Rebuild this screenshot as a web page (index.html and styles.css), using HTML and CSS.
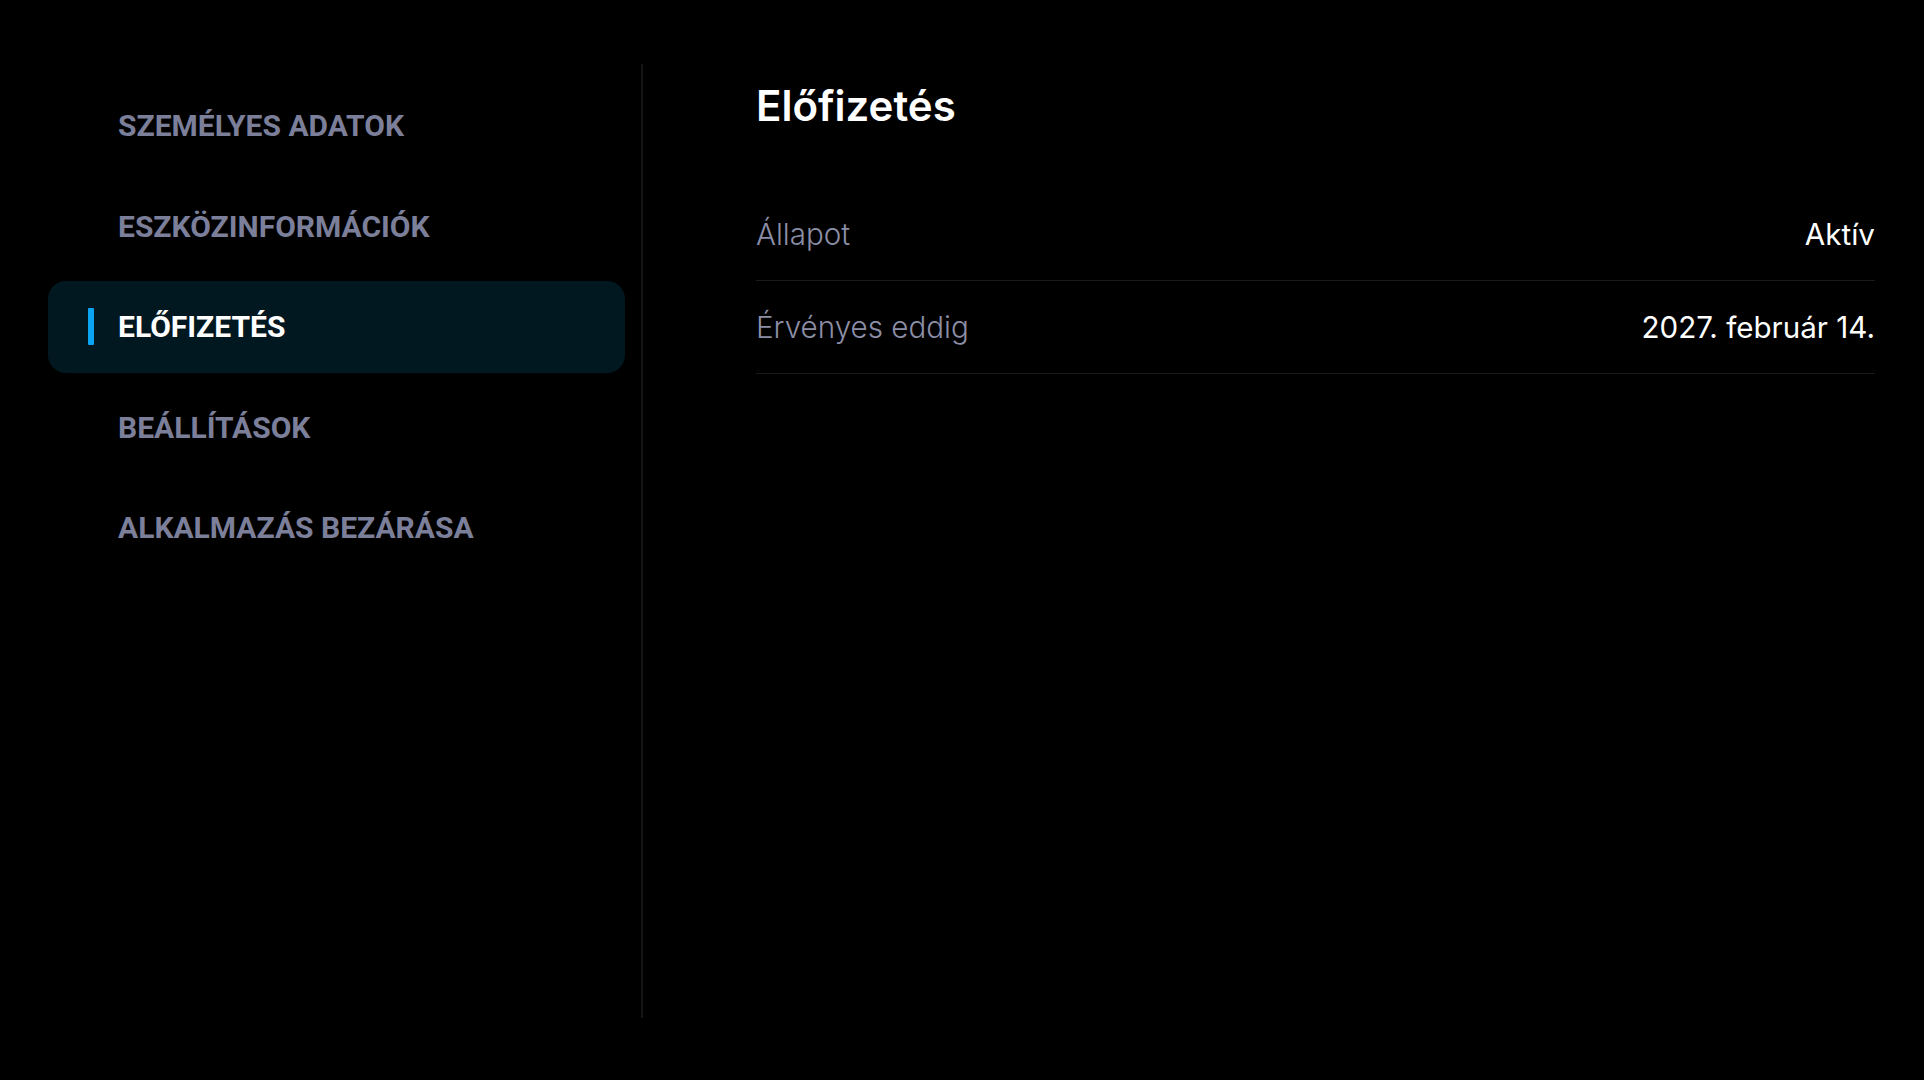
FILE: index.html
```html
<!DOCTYPE html>
<html lang="hu">
<head>
<meta charset="utf-8">
<title>Előfizetés</title>
<link rel="stylesheet" href="styles.css">
</head>
<body>
<div class="screen">
  <nav class="sidebar">
    <ul class="menu">
      <li class="menu-item">SZEMÉLYES ADATOK</li>
      <li class="menu-item">ESZKÖZINFORMÁCIÓK</li>
      <li class="menu-item is-active">ELŐFIZETÉS</li>
      <li class="menu-item">BEÁLLÍTÁSOK</li>
      <li class="menu-item">ALKALMAZÁS BEZÁRÁSA</li>
    </ul>
  </nav>
  <div class="divider"></div>
  <main class="content">
    <h1 class="title">Előfizetés</h1>
    <div class="rows">
      <div class="row"><span class="label">Állapot</span><span class="value">Aktív</span></div>
      <div class="row"><span class="label">Érvényes eddig</span><span class="value">2027. február 14.</span></div>
    </div>
  </main>
</div>
</body>
</html>
```
FILE: styles.css
```css
* { box-sizing: border-box; }
html, body {
  margin: 0;
  padding: 0;
  background: #000;
  height: 100%;
}
body {
  font-family: "Inter", "Noto Sans", sans-serif;
  color: #fff;
}
.screen {
  display: flex;
  height: 1080px;
  padding: 64px 49px 62px 48px;
}
.sidebar {
  width: 577px;
  flex: none;
  padding-top: 15.5px;
}
.menu {
  list-style: none;
  margin: 0;
  padding: 0;
  display: flex;
  flex-direction: column;
  gap: 8.5px;
}
.menu-item {
  position: relative;
  height: 92px;
  display: flex;
  align-items: center;
  padding-left: 70px;
  border-radius: 18px;
  font-family: "Roboto", "Liberation Sans", sans-serif;
  font-weight: 700;
  font-size: 30px;
  color: #7b7f99;
}
.menu-item.is-active {
  background: #021821;
  color: #fff;
}
.menu-item.is-active::before {
  content: "";
  position: absolute;
  left: 40px;
  top: 27px;
  width: 6px;
  height: 37px;
  background: #0ba4f2;
  border-radius: 1px;
}
.divider {
  flex: none;
  width: 2px;
  margin-left: 16px;
  background: #151515;
}
.content {
  flex: 1;
  padding-left: 113px;
}
.title {
  margin: 21px 0 0;
  height: 42px;
  line-height: 42px;
  font-size: 42px;
  font-weight: 600;
  color: #fff;
}
.rows {
  margin-top: 61px;
}
.row {
  height: 93px;
  display: flex;
  align-items: center;
  justify-content: space-between;
  border-bottom: 1px solid #1a1a1a;
  font-size: 29.6px;
}
.label {
  color: #8b8ea6;
  font-weight: 300;
}
.value {
  color: #fff;
  font-weight: 400;
}
```
